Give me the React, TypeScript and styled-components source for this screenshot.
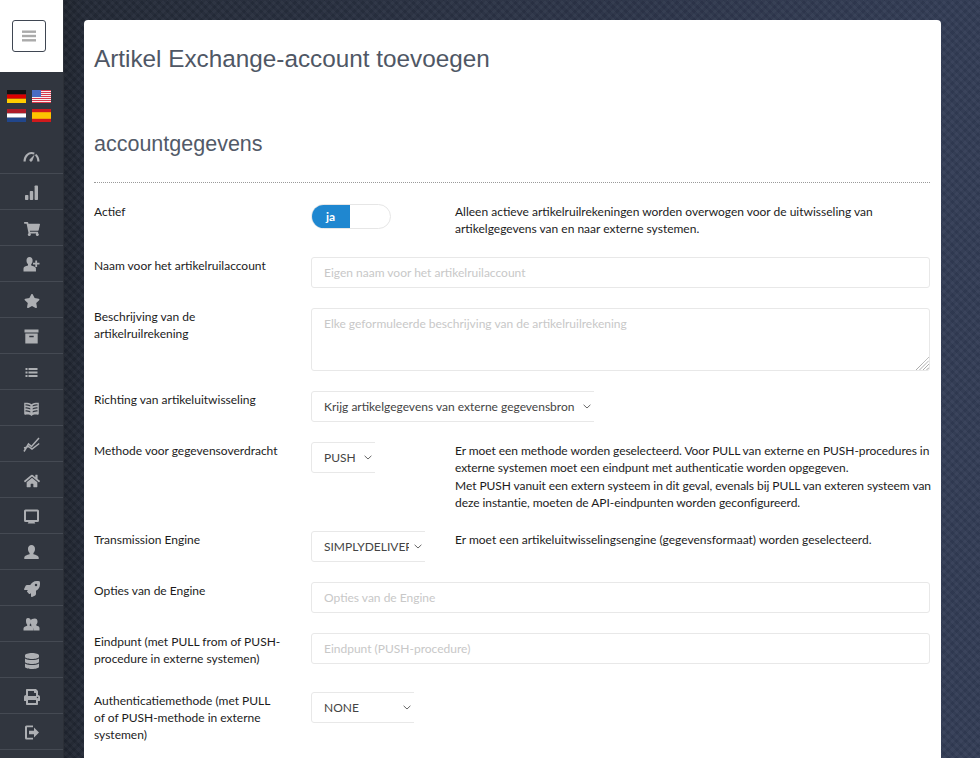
import React from "react";
import styled, { createGlobalStyle } from "styled-components";
import { FaDatabase, FaHome, FaPrint, FaRocket, FaShoppingCart, FaStar } from "react-icons/fa";

const GlobalStyle = createGlobalStyle`
  html, body {
    margin: 0;
    padding: 0;
    height: 100%;
    overflow: hidden;
  }
  body {
    font-family: Lato, "Open Sans", sans-serif;
    font-size: 12px;
    line-height: 1.42857;
    color: #1c1c1c;
  }
`;

const Page = styled.div`
  display: flex;
  width: 980px;
  height: 758px;
  overflow: hidden;
  background-color: #2b3344;
  background-image:
    repeating-linear-gradient(45deg, rgba(255, 255, 255, 0.025) 0 3px, rgba(0, 0, 0, 0.03) 3px 6px),
    repeating-linear-gradient(-45deg, rgba(255, 255, 255, 0.02) 0 3px, rgba(0, 0, 0, 0.03) 3px 6px),
    linear-gradient(90deg, #1f242e 64px, #232936 84px, #323c55 941px);
`;

const Sidebar = styled.aside`
  flex: 0 0 64px;
  box-sizing: border-box;
  display: flex;
  flex-direction: column;
  background: #31363f;
  border-right: 1px solid #2c3038;
`;

const Brand = styled.div`
  height: 72px;
  box-sizing: border-box;
  padding: 20px 0 0 12px;
  background: #fff;
`;

const MenuButton = styled.button`
  display: flex;
  align-items: center;
  justify-content: center;
  width: 34px;
  height: 32px;
  padding: 0;
  background: #fff;
  border: 1px solid #3f4652;
  border-radius: 3px;
`;

const Flags = styled.div`
  display: grid;
  grid-template-columns: 19px 19px;
  grid-auto-rows: 13px;
  column-gap: 6px;
  row-gap: 6px;
  height: 66px;
  box-sizing: border-box;
  padding: 18px 0 0 7px;
`;

const NavList = styled.nav`
  display: flex;
  flex-direction: column;
`;

const NavItem = styled.a`
  display: flex;
  align-items: center;
  justify-content: center;
  height: 35px;
  border-bottom: 1px solid #454a53;
  color: #adafb3;
  font-size: 16px;
  & > svg {
    position: relative;
    top: 1px;
  }
`;

const Main = styled.main`
  flex: 1;
  padding: 20px 39px 0 20px;
  min-width: 0;
`;

const Card = styled.section`
  height: 800px;
  box-sizing: border-box;
  padding: 20px 11px 0 10px;
  background: #fff;
  border-radius: 4px 4px 0 0;
`;

const Title = styled.h1`
  margin: 0;
  font-family: "Liberation Sans", Arial, sans-serif;
  font-size: 24.3px;
  font-weight: 400;
  line-height: 38px;
  color: #4f5765;
`;

const SectionTitle = styled.h2`
  margin: 51px 0 0;
  font-family: "Liberation Sans", Arial, sans-serif;
  font-size: 21.5px;
  font-weight: 400;
  line-height: 30px;
  color: #525a68;
`;

const Divider = styled.hr`
  margin: 23px 0 20px;
  height: 0;
  border: 0;
  border-top: 1px dotted #9a9a9a;
`;

const Form = styled.form`
  display: flex;
  flex-direction: column;
  gap: 20px;
`;

const Row = styled.div`
  display: flex;
  align-items: flex-start;
`;

const Label = styled.label`
  flex: 0 0 217px;
  box-sizing: border-box;
  padding: 0 30px 5px 0;
`;

const ShortControl = styled.div`
  flex: 0 0 144px;
`;

const Help = styled.p<{ $tight?: boolean }>`
  flex: 1;
  margin: 0 ${(p) => (p.$tight ? "-3px" : "0")} 0 0;
  letter-spacing: ${(p) => (p.$tight ? "-0.06px" : "normal")};
  color: #1c1c1c;
`;

const Switch = styled.div`
  display: flex;
  width: 80px;
  height: 25px;
  margin-top: 1px;
  box-sizing: border-box;
  border: 1px solid #e6e6e6;
  border-radius: 13px;
  overflow: hidden;
`;

const SwitchOn = styled.span`
  display: flex;
  align-items: center;
  justify-content: center;
  width: 39px;
  margin: -1px 0 -1px -1px;
  background: #1f87d0;
  color: #fff;
  font-weight: 700;
`;

const TextInput = styled.input`
  flex: 1;
  min-width: 0;
  height: 31px;
  box-sizing: border-box;
  padding: 0 12px;
  border: 1px solid #e8e8e8;
  border-radius: 3px;
  outline: 0;
  font: inherit;
  &::placeholder {
    color: #c8c8c8;
    opacity: 1;
  }
`;

const AreaWrap = styled.div`
  flex: 1;
  position: relative;
  min-width: 0;
  height: 63px;
`;

const TextArea = styled.textarea`
  display: block;
  width: 100%;
  height: 63px;
  box-sizing: border-box;
  padding: 6px 12px;
  border: 1px solid #e8e8e8;
  border-radius: 3px;
  outline: 0;
  resize: none;
  font: inherit;
  &::placeholder {
    color: #c8c8c8;
    opacity: 1;
  }
`;

const ResizeGrip = styled.svg`
  position: absolute;
  right: 1px;
  bottom: 1px;
  width: 13px;
  height: 13px;
  pointer-events: none;
`;

const SelectClip = styled.div<{ $width: number }>`
  position: relative;
  width: ${(p) => p.$width}px;
  height: 31px;
  overflow: hidden;
`;

const Select = styled.select`
  display: block;
  width: calc(100% + 4px);
  height: 31px;
  box-sizing: border-box;
  padding: 0 19px 0 12px;
  appearance: none;
  background: #fff;
  border: 1px solid #e8e8e8;
  border-radius: 3px 0 0 3px;
  outline: 0;
  font: inherit;
  color: #444;
`;

const Chevron = styled.svg`
  position: absolute;
  top: 13px;
  right: 3px;
  width: 8px;
  height: 5px;
  pointer-events: none;
`;

const menuBar = { width: 14, height: 2.4, fill: "#aaa" };

const Icon = styled.svg`
  width: 17px;
  height: 17px;
  fill: currentColor;
`;

const userPath =
  "M8 1c2.100 0 3.300 1.600 3.300 3.700 0 1.600-.6 3-1.500 3.800v1.200c2.500.7 5 1.300 5 3.300v1H1.200v-1c0-2 2.500-2.600 5-3.300V8.500C5.300 7.700 4.700 6.300 4.700 4.700 4.700 2.600 5.900 1 8 1z";

function Gauge() {
  return (
    <Icon viewBox="0 0 17 17">
      <path d="M.5 13.500C.4 8.400 4.200 4 8.500 4c1.200 0 2.300.3 3.300.8l-1.100 1.700A5.500 5.500 0 0 0 8.500 6C5.600 6 2.800 9.400 2.700 13.500zM13 5.700c2.200 1.600 3.500 4.500 3.500 7.800h-2.200c0-2.400-.8-4.600-2.300-6z" />
      <path d="M11.800 6.200 9.400 12.800a1.600 1.600 0 0 1-2.900-1.300z" />
    </Icon>
  );
}

function Bars() {
  return (
    <Icon viewBox="0 0 17 17">
      <rect x="2" y="11" width="3.400" height="5" rx="0.8" />
      <rect x="6.800" y="7" width="3.400" height="9" rx="0.8" />
      <rect x="11.600" y="1.500" width="3.400" height="14.500" rx="0.8" />
    </Icon>
  );
}

function UserAdd() {
  return (
    <Icon viewBox="0 0 17 17">
      <path d="M6.500 1c2 0 3.100 1.500 3.100 3.500 0 1.600-.6 2.900-1.400 3.700v1.200c2 .6 4.300 1.100 4.700 2.600l.1 3.500H.5v-3c0-2 2.300-2.500 4.500-3.100V8.200C4.100 7.400 3.500 6.100 3.500 4.500 3.500 2.500 4.500 1 6.500 1z" />
      <path d="M12.300 4.500h1.800v2.300h2.400v1.800h-2.400v2.300h-1.800V8.600H10V6.800h2.300z" />
    </Icon>
  );
}

function Archive() {
  return (
    <Icon viewBox="0 0 17 17">
      <rect x="1.500" y="1.500" width="14" height="3" />
      <path d="M2.300 5.500h12.400v10H2.300zm4 2.300v1.500h4.400V7.800z" fillRule="evenodd" />
    </Icon>
  );
}

function ListIcon() {
  return (
    <Icon viewBox="0 0 17 17">
      <rect x="2.500" y="4" width="2" height="2" />
      <rect x="5.500" y="4" width="9" height="2" />
      <rect x="2.500" y="7.500" width="2" height="2" />
      <rect x="5.500" y="7.500" width="9" height="2" />
      <rect x="2.500" y="11" width="2" height="2" />
      <rect x="5.500" y="11" width="9" height="2" />
    </Icon>
  );
}

function Book() {
  return (
    <Icon viewBox="0 0 17 17">
      <path
        d="M1.200 2.800C3.500 2.600 6.500 2.800 8.500 4.200c2-1.400 5-1.600 7.300-1.400v10.900c-.1 1-1 1-1.500 1-2-.4-4.300-.1-5.800 1.300C7 14.600 4.700 14.300 2.700 14.700c-.5 0-1.400 0-1.500-1zm1.300 1.400v1.200c1.500 0 3 .2 4.800 1.100V5.300c-1.500-.8-3.300-1.200-4.800-1.100zm0 3v1.200c1.500 0 3 .2 4.800 1.100V8.300C5.800 7.500 4 7.200 2.500 7.200zm0 3v1.200c1.500 0 3 .2 4.800 1.100v-1.200c-1.500-.8-3.300-1.100-4.800-1.100zm12-6c-1.500-.1-3.300.3-4.800 1.100v1.200c1.800-.9 3.300-1.100 4.800-1.100zm0 3c-1.500 0-3.300.3-4.800 1.100v1.200c1.800-.9 3.300-1.100 4.800-1.100zm0 3c-1.500 0-3.300.3-4.800 1.100v1.200c1.800-.9 3.300-1.100 4.800-1.100z"
        fillRule="evenodd"
      />
    </Icon>
  );
}

function Stats() {
  return (
    <Icon viewBox="0 0 17 17">
      <path
        d="M1 15.500 5.500 8l3 2.500L16 2M1 12l4.500-1.500 3.500 2.500L16.200 7.500"
        fill="none"
        stroke="currentColor"
        strokeWidth="1.500"
      />
    </Icon>
  );
}

function Display() {
  return (
    <Icon viewBox="0 0 17 17">
      <path
        d="M2.500 1.500h12A1.500 1.500 0 0 1 16 3v9.500a1.500 1.500 0 0 1-1.500 1.500h-3l.8 1.500H4.700l.8-1.500h-3A1.500 1.500 0 0 1 1 12.500V3a1.500 1.500 0 0 1 1.500-1.500zM3 3.500V12h11V3.500z"
        fillRule="evenodd"
      />
    </Icon>
  );
}

function UserIcon() {
  return (
    <Icon viewBox="0 0 16 16">
      <path d={userPath} />
    </Icon>
  );
}

function Group() {
  return (
    <Icon viewBox="0 0 17 17">
      <path d="M11.800 2.500c1.700 0 2.700 1.300 2.700 3 0 1.300-.5 2.400-1.200 3.100v1c1.500.5 3.200.9 3.200 2.400v2.500h-5.800c0-2.200-.8-3.100-2.400-3.800V8.600C7.600 7.900 7.200 6.800 7.200 5.500c0-.3 0-.6.1-.9.800-1.300 2.600-2.100 4.500-2.100z" />
      <path d="M5 2c1.900 0 3 1.400 3 3.300 0 1.400-.6 2.700-1.300 3.400v1.100c1.900.6 3.800 1.100 3.800 2.700v2h-10v-2c0-1.600 1.900-2.100 3.700-2.700V8.700C3.500 8 3 6.700 3 5.300 3 3.400 3.100 2 5 2z" />
    </Icon>
  );
}

function Exit() {
  return (
    <Icon viewBox="0 0 17 17">
      <path d="M3.500 1.500h6.500v1.800H4v10.400h6v1.800H3.500a1.500 1.500 0 0 1-1.500-1.500V3a1.500 1.500 0 0 1 1.500-1.500z" />
      <path d="M6 6.700h5V3.500l5 5-5 5v-3.200H6z" />
    </Icon>
  );
}

function FlagDE() {
  return (
    <svg viewBox="0 0 19 13" width="19" height="13">
      <rect width="19" height="4.400" fill="#111" />
      <rect y="4.400" width="19" height="4.300" fill="#d00" />
      <rect y="8.700" width="19" height="4.300" fill="#fc0" />
    </svg>
  );
}

function FlagUS() {
  const stripes = [0, 2, 4, 6, 8, 10, 12];
  return (
    <svg viewBox="0 0 19 13" width="19" height="13">
      <rect width="19" height="13" fill="#f6f0f0" />
      {stripes.map((y) => (
        <rect key={y} y={y} width="19" height="1" fill="#d8394c" />
      ))}
      <rect width="9" height="7" fill="#4a6cc4" />
    </svg>
  );
}

function FlagNL() {
  return (
    <svg viewBox="0 0 19 13" width="19" height="13">
      <rect width="19" height="4.400" fill="#ae1c28" />
      <rect y="4.400" width="19" height="4.300" fill="#fff" />
      <rect y="8.700" width="19" height="4.300" fill="#21468b" />
    </svg>
  );
}

function FlagES() {
  return (
    <svg viewBox="0 0 19 13" width="19" height="13">
      <rect width="19" height="13" fill="#d01a1d" />
      <rect y="3.200" width="19" height="6.600" fill="#fdc400" />
    </svg>
  );
}

const navIcons = [
  <Gauge />,
  <Bars />,
  <FaShoppingCart />,
  <UserAdd />,
  <FaStar />,
  <Archive />,
  <ListIcon />,
  <Book />,
  <Stats />,
  <FaHome />,
  <Display />,
  <UserIcon />,
  <FaRocket />,
  <Group />,
  <FaDatabase />,
  <FaPrint />,
  <Exit />,
];

function Dropdown({ width, value }: { width: number; value: string }) {
  return (
    <SelectClip $width={width}>
      <Select defaultValue={value}>
        <option>{value}</option>
      </Select>
      <Chevron viewBox="0 0 8 5">
        <path d="M.6.8 4 4 7.400.8" fill="none" stroke="#666" strokeWidth="1" />
      </Chevron>
    </SelectClip>
  );
}

export default function App() {
  return (
    <Page>
      <GlobalStyle />
      <Sidebar>
        <Brand>
          <MenuButton type="button" aria-label="menu">
            <svg width="14" height="12" viewBox="0 0 14 12">
              <rect y="0.500" {...menuBar} />
              <rect y="4.800" {...menuBar} />
              <rect y="9.100" {...menuBar} />
            </svg>
          </MenuButton>
        </Brand>
        <Flags>
          <FlagDE />
          <FlagUS />
          <FlagNL />
          <FlagES />
        </Flags>
        <NavList>
          {navIcons.map((icon, i) => (
            <NavItem key={i}>{icon}</NavItem>
          ))}
        </NavList>
      </Sidebar>
      <Main>
        <Card>
          <Title>Artikel Exchange-account toevoegen</Title>
          <SectionTitle>accountgegevens</SectionTitle>
          <Divider />
          <Form>
            <Row>
              <Label>Actief</Label>
              <ShortControl>
                <Switch>
                  <SwitchOn>ja</SwitchOn>
                </Switch>
              </ShortControl>
              <Help>
                Alleen actieve artikelruilrekeningen worden overwogen voor de uitwisseling van
                artikelgegevens van en naar externe systemen.
              </Help>
            </Row>
            <Row>
              <Label>Naam voor het artikelruilaccount</Label>
              <TextInput placeholder="Eigen naam voor het artikelruilaccount" />
            </Row>
            <Row>
              <Label>Beschrijving van de artikelruilrekening</Label>
              <AreaWrap>
                <TextArea placeholder="Elke geformuleerde beschrijving van de artikelruilrekening" />
                <ResizeGrip viewBox="0 0 13 13">
                  <path
                    d="M0 13 13 0M3.500 13 13 3.500M7 13l6-6M10.500 13l2.500-2.500"
                    stroke="#8a8a8a"
                    strokeWidth="1"
                    strokeDasharray="1 0.500"
                  />
                </ResizeGrip>
              </AreaWrap>
            </Row>
            <Row>
              <Label>Richting van artikeluitwisseling</Label>
              <Dropdown width={283} value="Krijg artikelgegevens van externe gegevensbron" />
            </Row>
            <Row>
              <Label>Methode voor gegevensoverdracht</Label>
              <ShortControl>
                <Dropdown width={64} value="PUSH" />
              </ShortControl>
              <Help $tight>
                Er moet een methode worden geselecteerd. Voor PULL van externe en PUSH-procedures in
                externe systemen moet een eindpunt met authenticatie worden opgegeven.
                <br />
                Met PUSH vanuit een extern systeem in dit geval, evenals bij PULL van exteren
                systeem van deze instantie, moeten de API-eindpunten worden geconfigureerd.
              </Help>
            </Row>
            <Row>
              <Label>Transmission Engine</Label>
              <ShortControl>
                <Dropdown width={114} value="SIMPLYDELIVERY" />
              </ShortControl>
              <Help>Er moet een artikeluitwisselingsengine (gegevensformaat) worden geselecteerd.</Help>
            </Row>
            <Row>
              <Label>Opties van de Engine</Label>
              <TextInput placeholder="Opties van de Engine" />
            </Row>
            <Row>
              <Label>Eindpunt (met PULL from of PUSH-procedure in externe systemen)</Label>
              <TextInput placeholder="Eindpunt (PUSH-procedure)" />
            </Row>
            <Row>
              <Label>Authenticatiemethode (met PULL of of PUSH-methode in externe systemen)</Label>
              <Dropdown width={103} value="NONE" />
            </Row>
          </Form>
        </Card>
      </Main>
    </Page>
  );
}
